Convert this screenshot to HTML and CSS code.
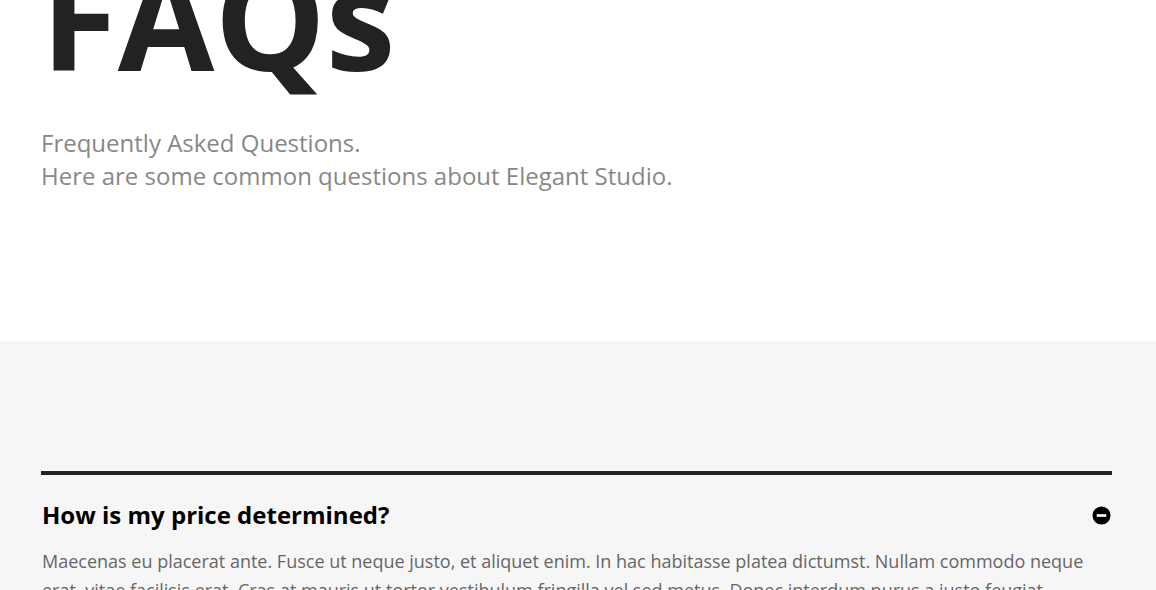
FILE: index.html
```html
<!DOCTYPE html>
<html lang="en">
<head>
  <meta charset="UTF-8">
  <meta name="viewport" content="width=device-width, initial-scale=1.0">
  <title>FAQs - Elegant Studio</title>
  <link rel="stylesheet" href="styles.css">
</head>
<body>
  <header class="intro">
    <h1>FAQs</h1>
    <p class="lead">Frequently Asked Questions.<br>Here are some common questions about Elegant Studio.</p>
  </header>

  <section class="faqs">
    <div class="faq open">
      <div class="faq-question">
        <h2>How is my price determined?</h2>
        <span class="toggle"><svg viewBox="0 0 20 20" width="19" height="19"><circle cx="10" cy="10" r="9.5" fill="#000"/><rect x="5" y="8.6" width="10" height="2.8" fill="#fff"/></svg></span>
      </div>
      <p class="faq-answer">Maecenas eu placerat ante. Fusce ut neque justo, et aliquet enim. In hac habitasse platea dictumst. Nullam commodo neque erat, vitae facilisis erat. Cras at mauris ut tortor vestibulum fringilla vel sed metus. Donec interdum purus a justo feugiat rutrum. Sed ac neque ut neque dictum accumsan. Cras lacinia rutrum risus, id viverra metus dictum sit amet.</p>
    </div>
  </section>
</body>
</html>
```

FILE: styles.css
```css
body {
  margin: 0;
  font-family: "Open Sans", "Liberation Sans", sans-serif;
  background-color: #fff;
}
.intro {
  padding: 0 44px 0 41px;
  height: 341px;
  overflow: hidden;
}
.intro h1 {
  margin: -63px 0 0 0;
  font-size: 140px;
  font-weight: 700;
  line-height: 160px;
  color: #222;
}
.lead {
  margin: 29px 0 0 0;
  font-size: 24px;
  line-height: 33px;
  color: #888;
}
.faqs {
  background-color: #f6f6f6;
  padding: 130px 44px 0 41px;
}
.faq {
  border-top: 4px solid #222;
}
.faq-question {
  display: flex;
  justify-content: space-between;
  align-items: center;
  padding: 24px 1px 0 1px;
}
.faq-question h2 {
  margin: 0;
  font-size: 24px;
  line-height: 32px;
  font-weight: 700;
  color: #000;
}
.toggle {
  display: flex;
}
.faq-answer {
  margin: 16px 0 0 1px;
  font-size: 18px;
  line-height: 29px;
  color: #666;
}
```
